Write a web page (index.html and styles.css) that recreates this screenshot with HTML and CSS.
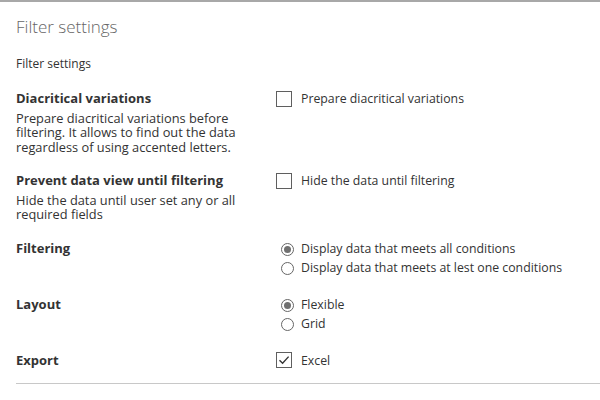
FILE: index.html
```html
<!DOCTYPE html>
<html>
<head>
<meta charset="utf-8">
<link rel="stylesheet" href="styles.css">
</head>
<body>
<div class="page">
  <h1 class="title">Filter settings</h1>
  <div class="subtitle">Filter settings</div>

  <div class="row">
    <div class="left">
      <div class="label">Diacritical variations</div>
      <div class="desc">Prepare diacritical variations before filtering. It allows to find out the data regardless of using accented letters.</div>
    </div>
    <div class="right">
      <div class="check-opt"><span class="box"></span><span class="opt-text">Prepare diacritical variations</span></div>
    </div>
  </div>

  <div class="row">
    <div class="left">
      <div class="label">Prevent data view until filtering</div>
      <div class="desc">Hide the data until user set any or all required fields</div>
    </div>
    <div class="right">
      <div class="check-opt"><span class="box"></span><span class="opt-text">Hide the data until filtering</span></div>
    </div>
  </div>

  <div class="row">
    <div class="left">
      <div class="label">Filtering</div>
    </div>
    <div class="right">
      <div class="radio-opt"><span class="radio checked"></span><span class="opt-text">Display data that meets all conditions</span></div>
      <div class="radio-opt"><span class="radio"></span><span class="opt-text">Display data that meets at lest one conditions</span></div>
    </div>
  </div>

  <div class="row">
    <div class="left">
      <div class="label">Layout</div>
    </div>
    <div class="right">
      <div class="radio-opt"><span class="radio checked"></span><span class="opt-text">Flexible</span></div>
      <div class="radio-opt"><span class="radio"></span><span class="opt-text">Grid</span></div>
    </div>
  </div>

  <div class="row">
    <div class="left">
      <div class="label">Export</div>
    </div>
    <div class="right">
      <div class="check-opt"><span class="box checked"><svg width="14" height="14" viewBox="0 0 14 14"><polyline points="2.5,7.2 5.6,10.2 11.6,3.6" fill="none" stroke="#333" stroke-width="1.4"/></svg></span><span class="opt-text">Excel</span></div>
    </div>
  </div>

  <div class="rule"></div>
</div>
</body>
</html>
```

FILE: styles.css
```css
* { box-sizing: border-box; }
html, body { margin: 0; padding: 0; background: #fff; }
body {
  font-family: "Open Sans", "Noto Sans", sans-serif;
  color: #333;
  font-size: 12px;
}
.page {
  border-top: 2px solid #a8a8a8;
  padding: 13px 0 0 16px;
  height: 400px;
}
.title {
  margin: 0;
  font-size: 17px;
  font-weight: 300;
  color: #666;
  line-height: 24px;
}
.subtitle {
  margin-top: 17px;
  line-height: 16px;
  font-size: 12px;
}
.row {
  display: grid;
  grid-template-columns: 260px 1fr;
  margin-top: 17px;
}
.label {
  font-size: 13px;
  font-weight: 700;
  line-height: 19px;
}
.desc {
  font-size: 12.8px;
  line-height: 14.5px;
  margin-top: 2.5px;
  padding-right: 8px;
}
.check-opt {
  display: flex;
  align-items: center;
  height: 19px;
  font-size: 12.3px;
}
.box {
  width: 16px;
  height: 16px;
  border: 1px solid #5f5f5f;
  margin-right: 9px;
  display: flex;
  align-items: center;
  justify-content: center;
  flex: none;
}
.radio-opt {
  display: flex;
  align-items: center;
  height: 19.5px;
  font-size: 12.3px;
}
.radio {
  width: 13px;
  height: 13px;
  border: 1px solid #666;
  border-radius: 50%;
  margin-left: 5px;
  margin-right: 7px;
  position: relative;
  flex: none;
  top: 1px;
}
.radio.checked::after {
  content: "";
  position: absolute;
  left: 2px;
  top: 2px;
  width: 7px;
  height: 7px;
  border-radius: 50%;
  background: #707070;
}
.opt-text { line-height: 19px; }
.rule {
  margin-top: 13px;
  border-top: 1px solid #c8c8c8;
}
```
